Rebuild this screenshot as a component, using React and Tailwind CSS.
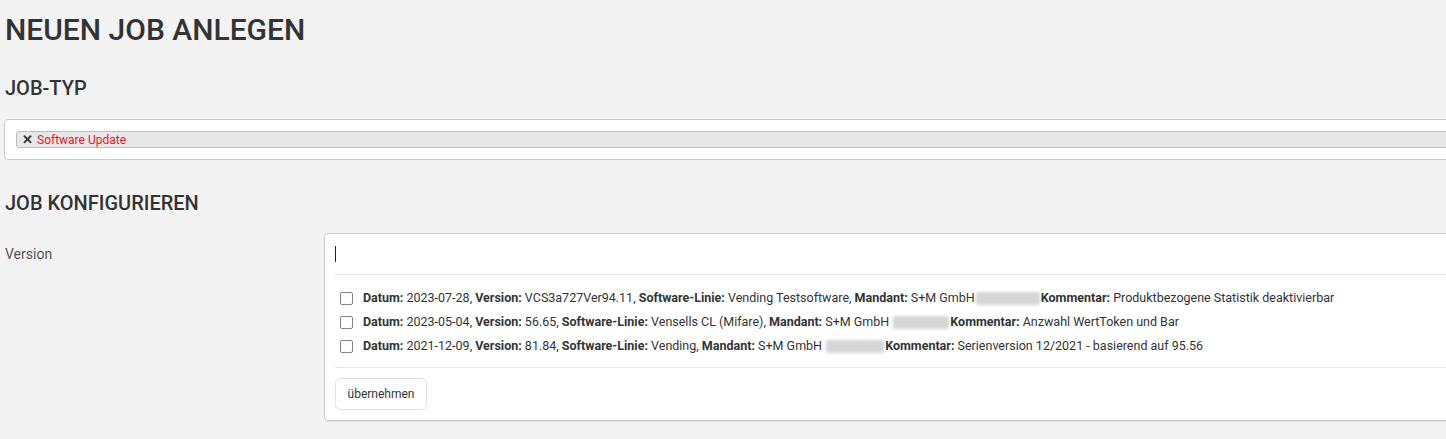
import React from "react";

const rows = [
  {
    datum: "2023-07-28",
    version: "VCS3a727Ver94.11",
    linie: "Vending Testsoftware",
    blurW: 64,
    blurGap: false,
    kommentar: "Produktbezogene Statistik deaktivierbar",
  },
  {
    datum: "2023-05-04",
    version: "56.65",
    linie: "Vensells CL (Mifare)",
    blurW: 56,
    blurGap: true,
    kommentar: "Anzwahl WertToken und Bar",
  },
  {
    datum: "2021-12-09",
    version: "81.84",
    linie: "Vending",
    blurW: 58,
    blurGap: true,
    kommentar: "Serienversion 12/2021 - basierend auf 95.56",
  },
];

function Row({ r }) {
  return (
    <div className="flex h-[24px] items-center pl-[5px]">
      <span className="box-border h-[13px] w-[13px] shrink-0 rounded-[2px] border-[1.5px] border-[#857f93] bg-white" />
      <span className="ml-[10px] flex items-center whitespace-nowrap text-[12.5px] text-[#333]">
        <b className="font-bold">Datum:</b>&nbsp;{r.datum},&nbsp;
        <b className="font-bold">Version:</b>&nbsp;{r.version},&nbsp;
        <b className="font-bold">Software-Linie:</b>&nbsp;{r.linie},&nbsp;
        <b className="font-bold">Mandant:</b>&nbsp;S+M GmbH{r.blurGap ? "\u00a0" : ""}
        <span
          className="mx-[1px] inline-block h-[13px] rounded-[2px] bg-[#d6d6d6] blur-[1.5px]"
          style={{ width: r.blurW }}
        />
        <b className="font-bold">Kommentar:</b>&nbsp;{r.kommentar}
      </span>
    </div>
  );
}

export default function App() {
  return (
    <div
      className="min-h-[439px] w-full overflow-hidden bg-[#f3f3f3] text-[#333]"
      style={{ fontFamily: "Roboto, 'Noto Sans', Arial, sans-serif" }}
    >
      <div className="w-[1500px] pl-[4px]">
        <h1 className="mt-[10px] pl-[1px] text-[30px] font-medium leading-[40px] text-[#333]">
          NEUEN JOB ANLEGEN
        </h1>

        <h2 className="mt-[26px] pl-[1px] text-[20px] font-medium leading-[24px] text-[#333]">
          JOB-TYP
        </h2>

        <div className="mt-[19px] rounded-[4px] border border-[#cacaca] bg-white pb-[11px] pl-[11px] pt-[11px]">
          <div className="flex h-[17px] items-center rounded-[3px] border border-[#bdbdbd] bg-[#e8e8e8] pl-[5px]">
            <span className="text-[13px] font-bold leading-none text-[#333]">✕</span>
            <span className="ml-[4px] text-[12px] leading-none text-[#d8202c]">Software Update</span>
          </div>
        </div>

        <h2 className="mt-[31px] pl-[1px] text-[20px] font-medium leading-[24px] text-[#333]">
          JOB KONFIGURIEREN
        </h2>

        <div className="mt-[18px] flex">
          <div className="w-[320px] shrink-0 pl-[1px] pt-[11px] text-[14px] leading-[20px] text-[#555]">
            Version
          </div>
          <div className="flex-1 rounded-[4px] border border-[#cacaca] bg-white px-[10px] shadow-[0_1px_2px_rgba(0,0,0,0.06)]">
            <div className="flex h-[41px] items-center border-b border-[#e6e6e6]">
              <span className="h-[16px] w-[1px] bg-[#222]" />
            </div>
            <div className="border-b border-[#e6e6e6] pb-[9px] pt-[11px]">
              {rows.map((r, i) => (
                <Row key={i} r={r} />
              ))}
            </div>
            <div className="pb-[10px] pt-[10px]">
              <button className="h-[32px] w-[92px] rounded-[5px] border border-[#e2e2e2] bg-white text-[12px] text-[#333]">
                übernehmen
              </button>
            </div>
          </div>
        </div>
      </div>
    </div>
  );
}
